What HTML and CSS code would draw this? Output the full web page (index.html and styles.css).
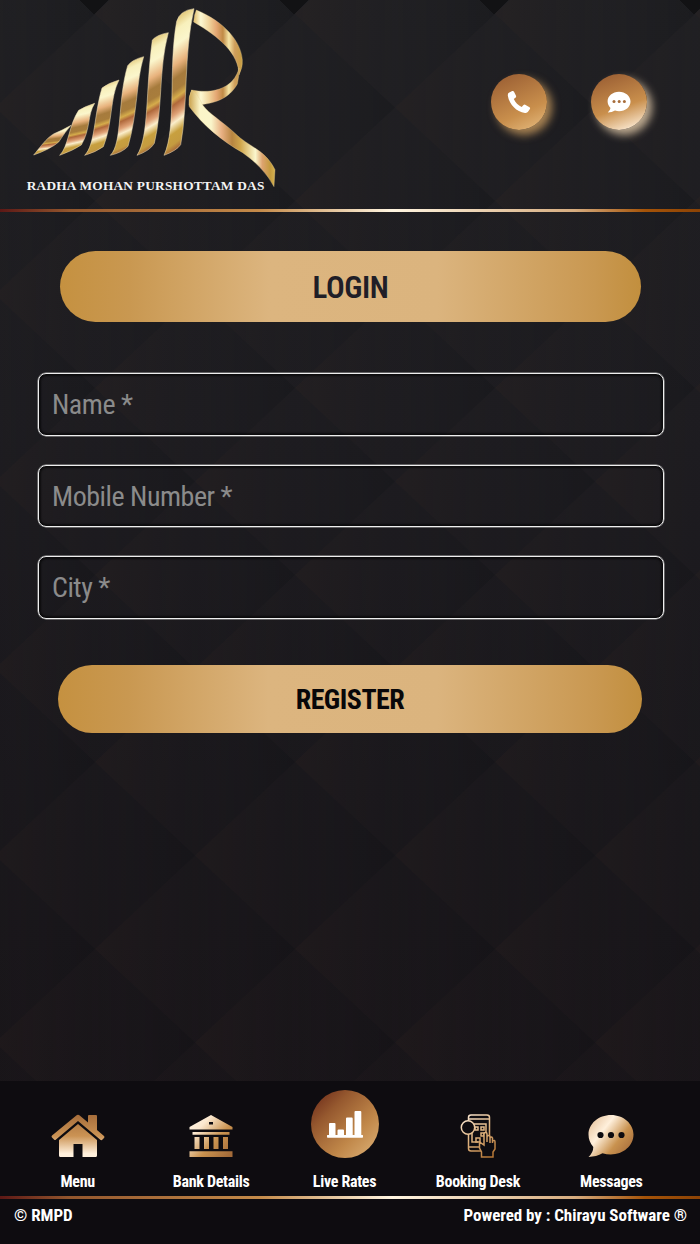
FILE: index.html
```html
<!DOCTYPE html>
<html lang="en">
<head>
  <meta charset="UTF-8" />
  <meta name="viewport" content="width=device-width, initial-scale=1.0"/>
  <title>RMPD - Login</title>
  <link rel="stylesheet" href="styles.css">
</head>
<body>

  <header class="header">
    <svg class="logo" viewBox="0 0 810 600">
      <defs>
        <linearGradient id="bar" x1="0" y1="0" x2="0.15" y2="1">
          <stop offset="0" stop-color="#bb9340"/>
          <stop offset="0.08" stop-color="#d9b65d"/>
          <stop offset="0.2" stop-color="#f8f0bc"/>
          <stop offset="0.3" stop-color="#fbf6cc"/>
          <stop offset="0.43" stop-color="#e8b27d"/>
          <stop offset="0.52" stop-color="#a67b3d"/>
          <stop offset="0.6" stop-color="#a87d3c"/>
          <stop offset="0.65" stop-color="#d5ac4b"/>
          <stop offset="0.69" stop-color="#b0683b"/>
          <stop offset="0.76" stop-color="#dfa277"/>
          <stop offset="0.81" stop-color="#fbeecb"/>
          <stop offset="0.88" stop-color="#c8a03f"/>
          <stop offset="0.95" stop-color="#c49b40"/>
          <stop offset="1" stop-color="#a5653a"/>
        </linearGradient>
        <linearGradient id="ribbon" gradientUnits="userSpaceOnUse" x1="520" y1="0" x2="668" y2="0">
          <stop offset="0" stop-color="#dfb965"/>
          <stop offset="0.15" stop-color="#fcf8d2"/>
          <stop offset="0.32" stop-color="#f0d49c"/>
          <stop offset="0.47" stop-color="#e4a672"/>
          <stop offset="0.6" stop-color="#c08a45"/>
          <stop offset="0.72" stop-color="#f5e5a5"/>
          <stop offset="0.84" stop-color="#cf9e5c"/>
          <stop offset="1" stop-color="#c79d3f"/>
        </linearGradient>
        <linearGradient id="leg" gradientUnits="userSpaceOnUse" x1="506" y1="0" x2="766" y2="0">
          <stop offset="0" stop-color="#c9a04a"/>
          <stop offset="0.13" stop-color="#fbf5c8"/>
          <stop offset="0.26" stop-color="#faf5ca"/>
          <stop offset="0.38" stop-color="#e8b083"/>
          <stop offset="0.5" stop-color="#b88541"/>
          <stop offset="0.6" stop-color="#d1a74c"/>
          <stop offset="0.77" stop-color="#fbf6cd"/>
          <stop offset="0.85" stop-color="#dda36f"/>
          <stop offset="0.94" stop-color="#c39a3d"/>
          <stop offset="1" stop-color="#d7b352"/>
        </linearGradient>
      </defs>
      <g fill="url(#bar)" stroke="#f3e3ba" stroke-width="1.5">
        <path d="M41 465 C58 445 78 415 102 401 Q125 392 153 376 Q136 395 116 426 Q92 447 41 465Z"/>
        <path d="M119 466 C145 442 147 373 176 331 Q196 319 224 310 C202 344 212 388 184 435 Q160 451 119 466Z"/>
        <path d="M194 466 C226 434 222 343 246 264 Q265 249 297 240 C269 294 279 368 250 440 Q228 456 194 466Z"/>
        <path d="M271 466 C308 430 292 300 323 197 Q336 179 371 170 C348 245 353 342 324 439 Q308 457 271 466Z"/>
        <path d="M351 466 C388 410 376 272 397 120 Q411 104 445 98 C415 211 429 322 403 430 Q390 452 351 466Z"/>
        <path d="M432 466 C471 382 444 203 470 64 Q480 31 522 26 C490 169 505 309 482 434 Q470 452 432 466Z"/>
      </g>
      <g fill="url(#ribbon)" stroke="#e9d199" stroke-width="1">
        <path d="M529 30 C613 65 663 124 667 180 Q669 201 657 225 C656 161 600 112 521 66 Q522 44 529 30Z"/>
        <path d="M657 204 Q658 227 652 252 C629 293 588 315 507 316 Q506 289 515 270 C585 284 643 261 657 204Z"/>
      </g>
      <path fill="url(#leg)" stroke="#e9d199" d="M515 270 Q504 292 508 320 C549 376 606 423 668 458 Q731 502 762 560 L765 509 C734 447 686 441 644 399 C603 361 568 342 548 315 Q535 285 515 270Z"/>
      <text class="logo-text" x="20" y="570" textLength="713">RADHA MOHAN PURSHOTTAM DAS</text>
    </svg>

    <div class="header-actions">
      <a class="round-btn" href="#">
        <svg width="24" height="24" viewBox="0 0 24 24" fill="#fff">
          <path d="M5.2 1.1 L1.9 2.8 Q.5 3.6 .9 6 C2.2 14.4 9.3 21.9 18 22.9 Q20.1 23.2 21 21.8 L22.9 19 Q23.5 18 22.5 17.2 L18.2 14.8 Q17.3 14.3 16.5 15.1 L14.7 17 C11.1 15.3 8.4 12.6 6.8 9 L8.7 7.4 Q9.4 6.7 9 5.8 L7 1.8 Q6.4.5 5.2 1.1Z"/>
        </svg>
      </a>
      <a class="round-btn chat-btn" href="#">
        <svg width="24" height="22" viewBox="0 0 24 22">
          <path fill="#fff" d="M12 .7 C5.7.7.6 5 .6 10.3 C.6 12.9 1.8 15.2 3.5 16.9 Q3.2 19.3.8 21.6 Q5 21.6 8 19.6 C16.4 21.9 23.5 16.8 23.5 10.4 C23.5 5 18.3.7 12 .7Z"/>
          <g fill="#a86d3b"><circle cx="7" cy="10.5" r="1.5"/><circle cx="12.2" cy="10.5" r="1.5"/><circle cx="17.4" cy="10.5" r="1.5"/></g>
        </svg>
      </a>
    </div>
  </header>

  <main class="container">
    <h1 class="title">LOGIN</h1>
    <form class="login-form">
      <input type="text" placeholder="Name *">
      <input type="text" placeholder="Mobile Number *">
      <input type="text" placeholder="City *">
      <button class="register-btn" type="button">REGISTER</button>
    </form>
  </main>

  <footer class="footer">
    <nav class="nav">
      <a class="nav-item" href="#">
        <svg width="54" height="44" viewBox="0 0 54 44">
          <defs>
            <linearGradient id="home" gradientUnits="userSpaceOnUse" x1="0" y1="0" x2="0" y2="44">
              <stop offset="0" stop-color="#a56c3a"/><stop offset="0.5" stop-color="#cb9354"/><stop offset="0.9" stop-color="#fff0dc"/>
            </linearGradient>
          </defs>
          <g fill="url(#home)">
            <path d="M25 1.7 Q27 0 29 1.7 L37 8.6 V2 Q37 1 38 1 H45 Q46 1 46 2 V16 L53 22 Q54 23 53 24 L51 26 Q50 26.5 49 25.5 L27 7 L5 25.5 Q4 26.5 3 25.5 L1 23.5 Q0 22.5 1 21.5Z"/>
            <path d="M27 10 L46 26 V41.5 Q46 43 44.5 43 H31.5 V30 H22.5 V43 H9.5 Q8 43 8 41.5 V26Z"/>
          </g>
        </svg>
        <span>Menu</span>
      </a>
      <a class="nav-item" href="#">
        <svg width="44" height="44" viewBox="0 0 44 44">
          <defs>
            <linearGradient id="bank" gradientUnits="userSpaceOnUse" x1="5" y1="5" x2="42" y2="40">
              <stop offset="0" stop-color="#fff2e0"/><stop offset="0.2" stop-color="#fbe8cf"/><stop offset="0.6" stop-color="#c9924f"/><stop offset="1" stop-color="#a36b39"/>
            </linearGradient>
          </defs>
          <path fill="url(#bank)" fill-rule="evenodd" d="M22 1 L43.5 13 V15.5 H.5 V13Z M20 8 V10.5 H24 V8Z M3.5 18 H40.5 V20.8 H3.5Z M5.5 23 H10.5 V35 H5.5Z M15 23 H20 V35 H15Z M24.5 23 H29.5 V35 H24.5Z M34 23 H39 V35 H34Z M.5 37.3 H43.5 V43 H.5Z"/>
        </svg>
        <span>Bank Details</span>
      </a>
      <a class="nav-item" href="#">
        <div class="live-btn">
          <svg width="38" height="28" viewBox="0 0 38 28" fill="#fff">
            <path d="M3 25 V13.8 Q3 13 4 13 H8.5 Q9.5 13 9.5 14 V25 H11.5 V20.5 Q11.5 19.5 12.5 19.5 H17 Q18 19.5 18 20.5 V25 H20 V8.5 Q20 7.5 21 7.5 H25.7 Q26.7 7.5 26.7 8.5 V25 H28.5 V2 Q28.5 1 29.5 1 H34.3 Q35.3 1 35.3 2 V25 H36.5 Q37 25 37 25.5 V27 Q37 27.7 36.3 27.7 H1.7 Q1 27.7 1 27 V25.5 Q1 25 1.5 25Z"/>
          </svg>
        </div>
        <span>Live Rates</span>
      </a>
      <a class="nav-item" href="#">
        <svg width="36" height="44" viewBox="0 0 36 44">
          <defs>
            <linearGradient id="desk" gradientUnits="userSpaceOnUse" x1="4" y1="4" x2="32" y2="42">
              <stop offset="0" stop-color="#f9e4cc"/><stop offset="0.45" stop-color="#dfb481"/><stop offset="1" stop-color="#b57634"/>
            </linearGradient>
          </defs>
          <g fill="none" stroke="url(#desk)" stroke-width="1.5">
            <rect x="8.5" y="1" width="21" height="36" rx="2.5"/>
            <path d="M8.5 5 H29.5 M8.5 33 H21 M12 18 V28 H18 M14 10 H26 V23"/>
            <rect x="15" y="13" width="3" height="3"/><rect x="21" y="13" width="3" height="3"/>
            <rect x="21" y="19" width="3" height="3"/><rect x="16" y="24" width="4" height="4"/>
            <circle cx="8" cy="13.5" r="6.7" fill="#0e0c10"/>
            <path fill="#0e0c10" d="M21.5 43 V38 L19.5 34 V28 L24 31 V20 Q24 18.5 25.5 18.5 T27 20 V28 V23 Q27 21.5 28.5 21.5 T30 23 V29 V24 Q31.5 22 32.5 24 V29 V27 Q35 25.5 35 28 V35 L33 38 V43Z"/>
          </g>
        </svg>
        <span>Booking Desk</span>
      </a>
      <a class="nav-item" href="#">
        <svg width="46" height="44" viewBox="0 0 46 44">
          <defs>
            <linearGradient id="msg" gradientUnits="userSpaceOnUse" x1="2" y1="8" x2="40" y2="38">
              <stop offset="0" stop-color="#e9c7a2"/><stop offset="0.32" stop-color="#fff0dc"/><stop offset="0.7" stop-color="#c9924f"/><stop offset="1" stop-color="#aa713e"/>
            </linearGradient>
          </defs>
          <path fill="url(#msg)" d="M23 1 C10.5 1 .5 9.8.5 20.5 Q.5 27.5 5.3 33 Q5.3 38.5.5 43 Q8.5 42.7 14.5 39.3 C31 44 45.5 33.8 45.5 20.5 C45.5 9.8 35.5 1 23 1Z"/>
          <g fill="#0e0c10"><circle cx="12.5" cy="21" r="3.1"/><circle cx="23" cy="21" r="3.1"/><circle cx="33.5" cy="21" r="3.1"/></g>
        </svg>
        <span>Messages</span>
      </a>
    </nav>
    <div class="copyright">
      <span>© RMPD</span>
      <span>Powered by : Chirayu Software ®</span>
    </div>
  </footer>

</body>
</html>
```
FILE: styles.css
```css
* {
  box-sizing: border-box;
}

body {
  margin: 0;
  height: 1244px;
  display: flex;
  flex-direction: column;
  overflow: hidden;
  font-family: "Roboto Condensed", Roboto, sans-serif;
  font-stretch: 75%;
  color: #fff;
  background-color: #19171b;
  /* diamond tiles over a slowly darkening base */
  background-image:
    url("data:image/svg+xml,%3Csvg xmlns='http://www.w3.org/2000/svg' width='200' height='187'%3E%3Cdefs%3E%3ClinearGradient id='a'%3E%3Cstop stop-color='%23382a26' stop-opacity='.22'/%3E%3Cstop offset='.5' stop-color='%232a262a' stop-opacity='.1'/%3E%3Cstop offset='1' stop-color='%23101216' stop-opacity='.25'/%3E%3C/linearGradient%3E%3C/defs%3E%3Cg fill='url(%23a)'%3E%3Cpath d='M0 93.5L100 0L200 93.5L100 187z'/%3E%3Cpath d='M-100 0L0-93.5L100 0L0 93.5z'/%3E%3Cpath d='M100 0L200-93.5L300 0L200 93.5z'/%3E%3Cpath d='M-100 187L0 93.5L100 187L0 280.5z'/%3E%3Cpath d='M100 187L200 93.5L300 187L200 280.5z'/%3E%3C/g%3E%3C/svg%3E"),
    linear-gradient(#1f1f22, #1c1b1f 35%, #18161a 65%, #171216);
  background-position: -5px 14px, 0 0;
}

.header {
  height: 212px;
  display: flex;
  justify-content: space-between;
  padding: 0 53px 0 20px;
  border-bottom: 3px solid;
  border-image: linear-gradient(90deg, #5c1715, #93562d 10%, #c48a49 37%, #fff5e1 56%, #d6ac7f 82%, #a55308 92%, #8c4305) 1;
  /* dark notches along the top edge */
  background-image: conic-gradient(from -47deg at 50% 100%, #121214 94deg, transparent 0);
  background-size: 200px 14px;
  background-position: -6px 0;
  background-repeat: repeat-x;
}

.logo {
  width: 270px;
  height: 200px;
}

.logo-text {
  font-family: "Liberation Serif", serif;
  font-size: 40px;
  font-weight: bold;
  fill: #f4f4f4;
}

.header-actions {
  display: flex;
  gap: 44px;
  padding-top: 74px;
}

.round-btn {
  width: 56px;
  height: 56px;
  display: flex;
  align-items: center;
  justify-content: center;
  border-radius: 50%;
  background: linear-gradient(155deg, #9c6034 8%, #c98f4c 65%, #e3b77b 95%);
  box-shadow: 5px 5px 9px rgba(213, 164, 99, 0.75);
}

.chat-btn {
  background: linear-gradient(160deg, #9c6034 8%, #c98f4c 58%, #fff0dc 95%);
  box-shadow: 5px 5px 9px rgba(229, 205, 171, 0.8);
}

.container {
  flex: 1;
  padding: 39px 36px 0 38px;
}

.title {
  height: 71px;
  margin: 0 23px 51px 22px;
  border-radius: 36px;
  text-align: center;
  font-size: 31px;
  font-weight: 600;
  line-height: 73px;
  letter-spacing: -0.4px;
  color: #201e27;
}

.title,
.register-btn {
  background: linear-gradient(90deg, #c59140, #c99851 12%, #dcb57f 36%, #dbb47e 65%, #c99851 92%, #c28f3e);
}

.login-form {
  display: flex;
  flex-direction: column;
}

.login-form input {
  height: 62.5px;
  margin-bottom: 29px;
  padding: 1px 13px 0;
  border: 1.5px solid #eee;
  border-radius: 8px;
  background: transparent;
  box-shadow: 0 0 0 0.5px #aaa, inset 0 0 2px 2px rgba(0, 0, 0, 0.6);
  color: #fff;
  font: inherit;
  font-size: 28px;
  letter-spacing: -0.48px;
}

.login-form input::placeholder {
  color: #8b8b8b;
}

.register-btn {
  height: 68px;
  margin: 17px 22px 0 20px;
  padding: 2px 0 0;
  border: none;
  border-radius: 34px;
  font: inherit;
  font-size: 28px;
  font-weight: 700;
  letter-spacing: -0.5px;
  color: #080709;
}

.footer {
  height: 163px;
  background: #0e0c10;
}

.nav {
  height: 118px;
  display: flex;
  padding: 0 22px 5px 11px;
  border-bottom: 3px solid;
  border-image: linear-gradient(90deg, #5c1715, #93562d 10%, #c48a49 37%, #fff5e1 56%, #d6ac7f 82%, #a55308 92%, #8c4305) 1;
}

.nav-item {
  flex: 1;
  display: flex;
  flex-direction: column;
  align-items: center;
  justify-content: flex-end;
  gap: 14px;
  color: #fff;
  text-decoration: none;
  font-size: 16px;
  font-weight: 700;
  line-height: 19px;
  letter-spacing: -0.3px;
}

.live-btn {
  width: 68px;
  height: 68px;
  display: flex;
  align-items: center;
  justify-content: center;
  border-radius: 50%;
  background: linear-gradient(135deg, #793920 12%, #96592f 30%, #c08749 65%, #d6a76c 90%);
}

.copyright {
  display: flex;
  justify-content: space-between;
  padding: 6px 13px 6px 14px;
  font-size: 17px;
  font-weight: 700;
  line-height: 20px;
  letter-spacing: -0.04px;
}
```
